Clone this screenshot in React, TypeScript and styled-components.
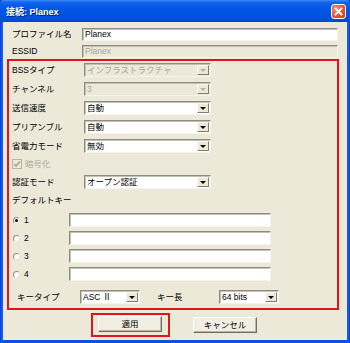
import React from "react";
import styled, { createGlobalStyle } from "styled-components";

const Global = createGlobalStyle`
  html, body { margin: 0; padding: 0; background: #ffffff; }
  * { box-sizing: border-box; }
`;

const FONT = `"Liberation Sans", "Noto Sans CJK JP", sans-serif`;

const Window = styled.div`
  width: 350px;
  height: 343px;
  display: flex;
  flex-direction: column;
  background: linear-gradient(to right, #0831d9 0, #166aee 2px, #0a52e0 3px, #0a52e0 347px, #166aee 348px, #0831d9 350px);
  font-family: ${FONT};
  font-size: 8.5px;
  color: #000;
`;

const TitleBar = styled.div`
  height: 22px;
  flex: none;
  display: flex;
  align-items: center;
  justify-content: space-between;
  padding: 0 4px 0 6px;
  background: linear-gradient(to bottom, #3c8ef8 0, #1667ee 2px, #0a5be8 5px, #0055e5 50%, #0050dd 85%, #0045cf 100%);
  border-radius: 4px 4px 0 0;
`;

const Title = styled.span`
  color: #fff;
  font-weight: bold;
  font-size: 9px;
  text-shadow: 1px 1px 0 #0a1e6a;
  margin-top: 1px;
`;

const CloseButton = styled.div`
  width: 15px;
  height: 15px;
  margin-top: 1px;
  border: 1px solid #fff;
  border-radius: 3px;
  background: radial-gradient(circle at 30% 30%, #f0916f 0, #e2563a 55%, #c9381c 100%);
  display: flex;
  align-items: center;
  justify-content: center;
`;

const Body = styled.div`
  flex: 1;
  margin: 0 3px 3px;
  background: #ece9d8;
  display: flex;
  flex-direction: column;
  padding: 6px 8px 0 4px;
`;

const TopRow = styled.div<{ $mt?: number }>`
  display: flex;
  align-items: center;
  height: 13px;
  padding-left: 5px;
  margin-top: ${(p) => p.$mt ?? 0}px;
`;

const Label = styled.span<{ $w: number }>`
  width: ${(p) => p.$w}px;
  flex: none;
  white-space: nowrap;
  line-height: 1;
`;

const TextField = styled.div<{ $w: number; $disabled?: boolean }>`
  width: ${(p) => p.$w}px;
  height: 100%;
  flex: none;
  display: flex;
  align-items: center;
  padding-left: 2px;
  background: ${(p) => (p.$disabled ? "#ece9d8" : "#ffffff")};
  color: ${(p) => (p.$disabled ? "#a7a69c" : "#000")};
  border-style: solid;
  border-width: 1px;
  border-color: #8d8b83 #f4f3ee #f4f3ee #8d8b83;
  box-shadow: inset 1px 1px 0 #c4c1b2;
  white-space: nowrap;
  line-height: 1;
`;

const SettingsBox = styled.div`
  margin-top: 1px;
  border: 2px solid #e4141b;
  display: flex;
  flex-direction: column;
  gap: 5px;
  padding: 2px 0 4px 3px;
`;

const FieldRow = styled.div<{ $h?: number }>`
  display: flex;
  align-items: center;
  height: ${(p) => p.$h ?? 14}px;
`;

const SelectBox = styled.div<{ $w: number; $disabled?: boolean }>`
  width: ${(p) => p.$w}px;
  height: 14px;
  flex: none;
  display: flex;
  align-items: stretch;
  background: ${(p) => (p.$disabled ? "#ece9d8" : "#ffffff")};
  border-style: solid;
  border-width: 1px;
  border-color: #8d8b83 #f4f3ee #f4f3ee #8d8b83;
  box-shadow: inset 1px 1px 0 #c4c1b2;
`;

const SelectText = styled.span<{ $disabled?: boolean }>`
  flex: 1;
  display: flex;
  align-items: center;
  padding-left: 2px;
  white-space: nowrap;
  overflow: hidden;
  line-height: 1;
  color: ${(p) => (p.$disabled ? "#a7a69c" : "#000")};
`;

const DropButton = styled.span<{ $disabled?: boolean }>`
  width: 12px;
  flex: none;
  margin: 1px 1px 1px 0;
  background: #ece9d8;
  border-style: solid;
  border-width: 1px;
  border-color: #fbfaf6 #7f7d74 #7f7d74 #fbfaf6;
  display: flex;
  align-items: center;
  justify-content: center;
  &::after {
    content: "";
    border-left: 3px solid transparent;
    border-right: 3px solid transparent;
    border-top: 3px solid ${(p) => (p.$disabled ? "#b3b1a6" : "#000")};
  }
`;

const CheckBox = styled.span`
  width: 10px;
  height: 10px;
  flex: none;
  border: 1px solid #b8b5a6;
  background: #ece9d8;
  display: flex;
  align-items: center;
  justify-content: center;
  margin-right: 3px;
`;

const DisabledText = styled.span`
  color: #aca899;
  line-height: 1;
`;

const KeyList = styled.div`
  display: flex;
  flex-direction: column;
  gap: 4px;
  margin-top: 2px;
`;

const KeyRow = styled.div`
  display: flex;
  align-items: center;
  height: 14px;
  padding-left: 1px;
`;

const RadioCell = styled.span`
  width: 56px;
  flex: none;
  display: flex;
  align-items: center;
  gap: 4px;
  line-height: 1;
`;

const Radio = styled.span<{ $checked?: boolean }>`
  width: 7px;
  height: 7px;
  border-radius: 50%;
  background: #fff;
  border-style: solid;
  border-width: 1px;
  border-color: #8d8b83 #e8e6dc #e8e6dc #8d8b83;
  display: flex;
  align-items: center;
  justify-content: center;
  &::after {
    content: "";
    width: 3px;
    height: 3px;
    border-radius: 50%;
    background: ${(p) => (p.$checked ? "#000" : "transparent")};
  }
`;

const KeyTypeRow = styled.div`
  display: flex;
  align-items: center;
  height: 14px;
  padding-left: 5px;
  margin-top: 4px;
`;

const Spacer = styled.span<{ $w: number }>`
  width: ${(p) => p.$w}px;
  flex: none;
`;

const ButtonRow = styled.div`
  display: flex;
  align-items: center;
  margin-top: 3px;
  padding-left: 84px;
  gap: 23px;
`;

const Highlight = styled.div`
  border: 2px solid #e4141b;
  padding: 1px 6px 3px 5px;
  display: flex;
`;

const Button = styled.div`
  width: 64px;
  height: 16px;
  display: flex;
  align-items: center;
  justify-content: center;
  background: #f1efe3;
  border-style: solid;
  border-width: 1px;
  border-color: #ffffff #6f6d66 #6f6d66 #ffffff;
  box-shadow: inset -1px -1px 0 #b9b6a7;
  line-height: 1;
`;

type SelProps = { w: number; value: string; disabled?: boolean };
const Select = ({ w, value, disabled }: SelProps) => (
  <SelectBox $w={w} $disabled={disabled}>
    <SelectText $disabled={disabled}>{value}</SelectText>
    <DropButton $disabled={disabled} />
  </SelectBox>
);

export default function App() {
  const selects = [
    { label: "BSSタイプ", value: "インフラストラクチャ", disabled: true },
    { label: "チャンネル", value: "3", disabled: true },
    { label: "送信速度", value: "自動" },
    { label: "プリアンブル", value: "自動" },
    { label: "省電力モード", value: "無効" },
  ];
  return (
    <>
      <Global />
      <Window>
        <TitleBar>
          <Title>接続: Planex</Title>
          <CloseButton>
            <svg width="9" height="9" viewBox="0 0 9 9">
              <path d="M1.5 1.5 L7.5 7.5 M7.5 1.5 L1.5 7.5" stroke="#fff" strokeWidth="1.8" strokeLinecap="square" />
            </svg>
          </CloseButton>
        </TitleBar>
        <Body>
          <TopRow>
            <Label $w={70}>プロファイル名</Label>
            <TextField $w={256}>Planex</TextField>
          </TopRow>
          <TopRow $mt={4}>
            <Label $w={70}>ESSID</Label>
            <TextField $w={256} $disabled>
              Planex
            </TextField>
          </TopRow>
          <SettingsBox>
            {selects.map((s) => (
              <FieldRow key={s.label}>
                <Label $w={72}>{s.label}</Label>
                <Select w={127} value={s.value} disabled={s.disabled} />
              </FieldRow>
            ))}
            <FieldRow $h={12}>
              <CheckBox>
                <svg width="8" height="8" viewBox="0 0 8 8">
                  <path d="M1 4 L3 6 L7 1.5" stroke="#aca899" strokeWidth="1.6" fill="none" />
                </svg>
              </CheckBox>
              <DisabledText>暗号化</DisabledText>
            </FieldRow>
            <FieldRow>
              <Label $w={72}>認証モード</Label>
              <Select w={127} value="オープン認証" />
            </FieldRow>
            <FieldRow $h={12}>
              <Label $w={72}>デフォルトキー</Label>
            </FieldRow>
            <KeyList>
              {[1, 2, 3, 4].map((n) => (
                <KeyRow key={n}>
                  <RadioCell>
                    <Radio $checked={n === 1} />
                    {n}
                  </RadioCell>
                  <TextField $w={202} />
                </KeyRow>
              ))}
            </KeyList>
            <KeyTypeRow>
              <Label $w={63}>キータイプ</Label>
              <Select w={60} value="ASC Ⅱ" />
              <Spacer $w={17} />
              <Label $w={62}>キー長</Label>
              <Select w={60} value="64 bits" />
            </KeyTypeRow>
          </SettingsBox>
          <ButtonRow>
            <Highlight>
              <Button>適用</Button>
            </Highlight>
            <Button>キャンセル</Button>
          </ButtonRow>
        </Body>
      </Window>
    </>
  );
}
